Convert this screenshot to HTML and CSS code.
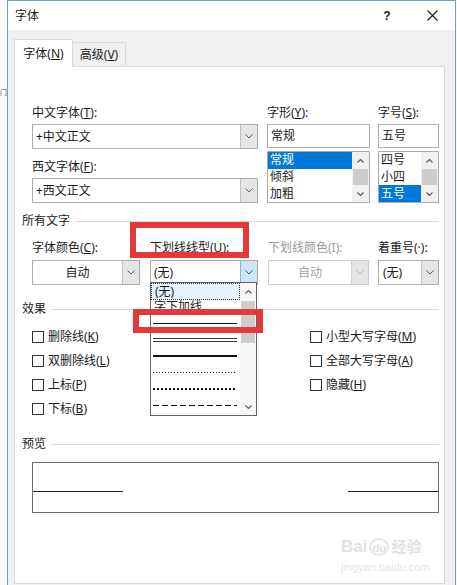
FILE: index.html
```html
<!DOCTYPE html>
<html lang="zh-CN">
<head>
<meta charset="utf-8">
<title>字体</title>
<link rel="stylesheet" href="styles.css">
</head>
<body>
<div class="desk">
  <div class="strip"><span class="strip-glyph">门</span></div>
  <div class="win">
    <div class="titlebar">
      <span class="title">字体</span>
      <span class="cap cap-help">?</span>
      <span class="cap cap-close"><svg width="11" height="11" viewBox="0 0 11 11"><path d="M0.5 0.5L10.5 10.5M10.5 0.5L0.5 10.5" stroke="#1a1a1a" stroke-width="1.1" fill="none"/></svg></span>
    </div>
    <div class="body">
      <div class="tabs">
        <div class="tab active">字体(<u>N</u>)</div>
        <div class="tab">高级(<u>V</u>)</div>
      </div>
      <div class="panel">
        <div class="fonts">
          <div class="col-a">
            <div class="lbl">中文字体(<u>T</u>):</div>
            <div class="combo"><span class="val">+中文正文</span><span class="btn"><svg width="8" height="5" viewBox="0 0 8 5"><path d="M0.5 0.5L4 4L7.5 0.5" fill="none" stroke="#606060"/></svg></span></div>
            <div class="lbl lbl-gap">西文字体(<u>F</u>):</div>
            <div class="combo"><span class="val">+西文正文</span><span class="btn"><svg width="8" height="5" viewBox="0 0 8 5"><path d="M0.5 0.5L4 4L7.5 0.5" fill="none" stroke="#606060"/></svg></span></div>
          </div>
          <div class="col-b">
            <div class="lbl">字形(<u>Y</u>):</div>
            <div class="input">常规</div>
            <div class="list">
              <div class="items">
                <div class="item sel">常规</div>
                <div class="item">倾斜</div>
                <div class="item">加粗</div>
              </div>
              <div class="sb">
                <span class="sb-arrow"><svg width="7" height="4" viewBox="0 0 7 4"><path d="M0.5 3.5L3.5 0.5L6.5 3.5" fill="none" stroke="#606060" stroke-width="1.2"/></svg></span>
                <span class="sb-thumb"></span>
                <span class="sb-fill"></span>
                <span class="sb-arrow"><svg width="7" height="4" viewBox="0 0 7 4"><path d="M0.5 0.5L3.5 3.5L6.5 0.5" fill="none" stroke="#606060" stroke-width="1.2"/></svg></span>
              </div>
            </div>
          </div>
          <div class="col-c">
            <div class="lbl">字号(<u>S</u>):</div>
            <div class="input">五号</div>
            <div class="list">
              <div class="items">
                <div class="item">四号</div>
                <div class="item">小四</div>
                <div class="item sel">五号</div>
              </div>
              <div class="sb">
                <span class="sb-arrow"><svg width="7" height="4" viewBox="0 0 7 4"><path d="M0.5 3.5L3.5 0.5L6.5 3.5" fill="none" stroke="#606060" stroke-width="1.2"/></svg></span>
                <span class="sb-thumb"></span>
                <span class="sb-fill"></span>
                <span class="sb-arrow"><svg width="7" height="4" viewBox="0 0 7 4"><path d="M0.5 0.5L3.5 3.5L6.5 0.5" fill="none" stroke="#606060" stroke-width="1.2"/></svg></span>
              </div>
            </div>
          </div>
        </div>

        <div class="heading heading-all">所有文字</div>

        <div class="colors">
          <div class="c1">
            <div class="lbl lbl-b">字体颜色(<u>C</u>):</div>
            <div class="combo center"><span class="val">自动</span><span class="btn"><svg width="8" height="5" viewBox="0 0 8 5"><path d="M0.5 0.5L4 4L7.5 0.5" fill="none" stroke="#606060"/></svg></span></div>
          </div>
          <div class="c2">
            <div class="lbl lbl-b">下划线线型(<u>U</u>):</div>
            <div class="combo hot"><span class="val">(无)</span><span class="btn"><svg width="8" height="5" viewBox="0 0 8 5"><path d="M0.5 0.5L4 4L7.5 0.5" fill="none" stroke="#2b5f9e"/></svg></span>
              <div class="dd">
                <div class="dd-items">
                  <div class="dd-item focus">(无)</div>
                  <div class="dd-item">字下加线</div>
                  <div class="dd-item"><span class="ln ln-single"></span></div>
                  <div class="dd-item"><span class="ln ln-double"></span></div>
                  <div class="dd-item"><span class="ln ln-thick"></span></div>
                  <div class="dd-item"><span class="ln ln-dot"></span></div>
                  <div class="dd-item"><span class="ln ln-dotbold"></span></div>
                  <div class="dd-item"><span class="ln ln-dash"></span></div>
                </div>
                <div class="dd-sb">
                  <span class="sb-arrow"><svg width="7" height="4" viewBox="0 0 7 4"><path d="M0.5 3.5L3.5 0.5L6.5 3.5" fill="none" stroke="#606060" stroke-width="1.2"/></svg></span>
                  <span class="dd-thumb"></span>
                  <span class="sb-fill"></span>
                  <span class="sb-arrow"><svg width="7" height="4" viewBox="0 0 7 4"><path d="M0.5 0.5L3.5 3.5L6.5 0.5" fill="none" stroke="#606060" stroke-width="1.2"/></svg></span>
                </div>
              </div>
            </div>
          </div>
          <div class="c3">
            <div class="lbl lbl-b lbl-off">下划线颜色(I):</div>
            <div class="combo center off"><span class="val">自动</span><span class="btn"><svg width="8" height="5" viewBox="0 0 8 5"><path d="M0.5 0.5L4 4L7.5 0.5" fill="none" stroke="#b5b5b5"/></svg></span></div>
          </div>
          <div class="c4">
            <div class="lbl lbl-b">着重号(·):</div>
            <div class="combo"><span class="val val-em">(无)</span><span class="btn"><svg width="8" height="5" viewBox="0 0 8 5"><path d="M0.5 0.5L4 4L7.5 0.5" fill="none" stroke="#606060"/></svg></span></div>
          </div>
        </div>

        <div class="heading heading-fx">效果</div>

        <div class="effects">
          <div class="cb"><span class="box"></span><span>删除线(<u>K</u>)</span></div>
          <div class="cb"><span class="box"></span><span>双删除线(<u>L</u>)</span></div>
          <div class="cb"><span class="box"></span><span>上标(<u>P</u>)</span></div>
          <div class="cb"><span class="box"></span><span>下标(<u>B</u>)</span></div>
          <div class="cb"><span class="box"></span><span>小型大写字母(<u>M</u>)</span></div>
          <div class="cb"><span class="box"></span><span>全部大写字母(<u>A</u>)</span></div>
          <div class="cb"><span class="box"></span><span>隐藏(<u>H</u>)</span></div>
        </div>

        <div class="heading heading-pv">预览</div>

        <div class="preview">
          <span class="pline"></span>
          <span class="pline"></span>
        </div>

        <div class="wm">
          <div class="wm-top"><span>Bai</span><span class="wm-du">du</span><span class="wm-cn">经验</span></div>
          <div class="wm-url">jingyan.baidu.com</div>
        </div>

        <div class="mark mark1"></div>
        <div class="mark mark2"></div>
      </div>
    </div>
  </div>
</div>
</body>
</html>
```

FILE: styles.css
```css
* { box-sizing: border-box; }
html, body { margin: 0; padding: 0; }
body {
  width: 457px;
  height: 585px;
  overflow: hidden;
  background: #fbfbfb;
  font-family: "Noto Sans", "Noto Sans CJK SC", "Microsoft YaHei", sans-serif;
  font-size: 12px;
  color: #1a1a1a;
}
u { text-decoration: underline; text-underline-offset: 1px; }

.desk { display: flex; height: 585px; }
.strip { width: 7px; overflow: hidden; padding-top: 88px; }
.strip-glyph { display: block; font-size: 7px; line-height: 10px; color: #555; }

.win {
  width: 449px;
  height: 585px;
  border: 1px solid #62a7bb;
  border-bottom: none;
  background: #f0f0f0;
  display: flex;
  flex-direction: column;
}
.titlebar {
  height: 29px;
  background: #fff;
  display: flex;
  align-items: center;
  padding-left: 7px;
}
.title { flex: 1; line-height: 16px; }
.cap { height: 29px; display: flex; align-items: center; justify-content: center; }
.cap-help { width: 44px; font-family: "Liberation Sans", sans-serif; font-size: 12px; font-weight: bold; color: #222; }
.cap-close { width: 46px; }

.body { padding: 9px 10px 0 6px; }
.tabs { display: flex; align-items: flex-end; height: 27px; position: relative; z-index: 1; }
.tab {
  height: 24px;
  width: 53px;
  border: 1px solid #d9d9d9;
  border-left: none;
  border-bottom: none;
  background: #f0f0f0;
  display: flex;
  align-items: center;
  justify-content: center;
  line-height: 16px;
}
.tab.active {
  height: 28px;
  width: 59px;
  border-left: 1px solid #d9d9d9;
  background: #fff;
  margin-bottom: -1px;
}

.panel {
  position: relative;
  height: 518px;
  border: 1px solid #d9d9d9;
  background: #fff;
  padding: 38px 5px 0 7px;
}

.fonts { display: flex; margin-left: 10px; }
.col-a { width: 226px; }
.col-b { width: 103px; margin-left: 9px; }
.col-c { width: 61px; margin-left: 8px; }

.lbl { height: 16px; line-height: 16px; margin-bottom: 3px; white-space: nowrap; }
.lbl-gap { margin-top: 10px; }
.lbl-b { margin-bottom: 4px; }
.lbl-off { color: #9a9a9a; }

.combo {
  position: relative;
  height: 25px;
  border: 1px solid #adadad;
  background: #fff;
  display: flex;
  align-items: center;
}
.val { flex: 1; padding-left: 3px; line-height: 16px; white-space: nowrap; }
.val-em { padding-left: 4px; }
.btn {
  width: 17px;
  height: 100%;
  background: #e5e5e5;
  border-left: 1px solid #c2c2c2;
  display: flex;
  align-items: center;
  justify-content: center;
}
.combo.center .val { text-align: center; padding-left: 0; }
.combo.hot .btn { background: #cce4f7; border-left-color: #7eb4ea; }
.combo.off { border-color: #cccccc; }
.combo.off .val { color: #a6a6a6; }
.combo.off .btn { background: #e6e6e6; border-left-color: #d2d2d2; }

.input { height: 24px; border: 1px solid #adadad; padding-left: 3px; line-height: 22px; }
.list { margin-top: 3px; height: 52px; border: 1px solid #adadad; display: flex; }
.items { flex: 1; display: flex; flex-direction: column; }
.item { flex: 1; padding-left: 2px; display: flex; align-items: center; line-height: 16px; }
.item.sel { background: #0078d7; color: #fff; }
.sb { width: 17px; background: #f0f0f0; display: flex; flex-direction: column; }
.sb-arrow { height: 17px; flex: none; display: flex; align-items: center; justify-content: center; }
.sb-thumb { height: 16px; background: #cdcdcd; margin: 0 1px; }
.sb-fill { flex: 1; }

.heading {
  display: flex;
  align-items: center;
  height: 16px;
  line-height: 16px;
  white-space: nowrap;
}
.heading::after { content: ""; flex: 1; height: 1px; background: #dcdcdc; margin-left: 5px; }
.heading-all { margin-top: 10px; }
.heading-fx { margin-top: 16px; }
.heading-pv { margin-top: 15px; }

.colors { display: flex; margin-top: 11px; margin-left: 10px; }
.c1 { width: 108px; }
.c2 { width: 108px; margin-left: 10px; }
.c3 { width: 101px; margin-left: 10px; }
.c4 { width: 61px; margin-left: 9px; }

.dd {
  position: absolute;
  left: -1px;
  top: 21px;
  width: 107px;
  height: 134px;
  border: 1px solid #646464;
  background: #fff;
  display: flex;
  z-index: 2;
}
.dd-items { flex: 1; display: flex; flex-direction: column; }
.dd-item {
  height: 16.5px;
  flex: none;
  padding-left: 3px;
  padding-bottom: 2px;
  display: flex;
  align-items: center;
  line-height: 15px;
  white-space: nowrap;
  overflow: hidden;
}
.dd-item.focus { border: 1px dotted #333; background: #e5f1fb; padding-bottom: 0; }
.ln { display: block; width: 84px; margin-left: -1px; }
.ln-single { height: 1px; background: #111; }
.ln-double { height: 4px; border-top: 1px solid #333; border-bottom: 1px solid #333; }
.ln-thick { height: 2px; background: #111; }
.ln-dot { height: 1px; background: repeating-linear-gradient(90deg, #111 0 1px, transparent 1px 3px); }
.ln-dotbold { height: 2px; background: repeating-linear-gradient(90deg, #111 0 2px, transparent 2px 4px); }
.ln-dash { height: 1px; background: repeating-linear-gradient(90deg, #111 0 6px, transparent 6px 9px); }
.dd-sb { width: 16px; background: #f7f7f7; display: flex; flex-direction: column; }
.dd-thumb { height: 42px; background: #cdcdcd; margin: 1px 1px 0; }

.effects {
  display: grid;
  grid-template-columns: 278px 1fr;
  grid-template-rows: repeat(4, 24px);
  grid-auto-flow: column;
  margin-top: 8px;
  margin-left: 10px;
}
.cb { display: flex; align-items: center; gap: 4px; line-height: 16px; white-space: nowrap; }
.box { width: 12px; height: 12px; border: 1px solid #333; background: #fff; flex: none; }

.preview {
  margin: 10px 0 0 10px;
  height: 51px;
  border: 1px solid #6b6b6b;
  display: flex;
  justify-content: space-between;
  align-items: flex-start;
  padding-top: 28px;
}
.pline { width: 90px; height: 1px; background: #222; }

.wm {
  position: absolute;
  left: 326px;
  top: 470px;
  color: #e2e2e2;
  font-family: "Liberation Sans", "Noto Sans CJK SC", sans-serif;
}
.wm-top { display: flex; align-items: center; font-size: 17px; line-height: 20px; font-weight: bold; }
.wm-du {
  font-size: 11px;
  line-height: 16px;
  width: 20px;
  height: 18px;
  border: 2px solid #e6e6e6;
  border-radius: 50%;
  text-align: center;
  margin: 0 2px;
}
.wm-cn { font-size: 15px; }
.wm-url { font-size: 11px; line-height: 14px; margin-top: 3px; color: #e4e4e4; }

.mark { position: absolute; border: 6px solid #e5383b; z-index: 3; }
.mark1 { left: 115px; top: 155px; width: 119px; height: 36px; }
.mark2 { left: 118px; top: 242px; width: 130px; height: 24px; }
```
